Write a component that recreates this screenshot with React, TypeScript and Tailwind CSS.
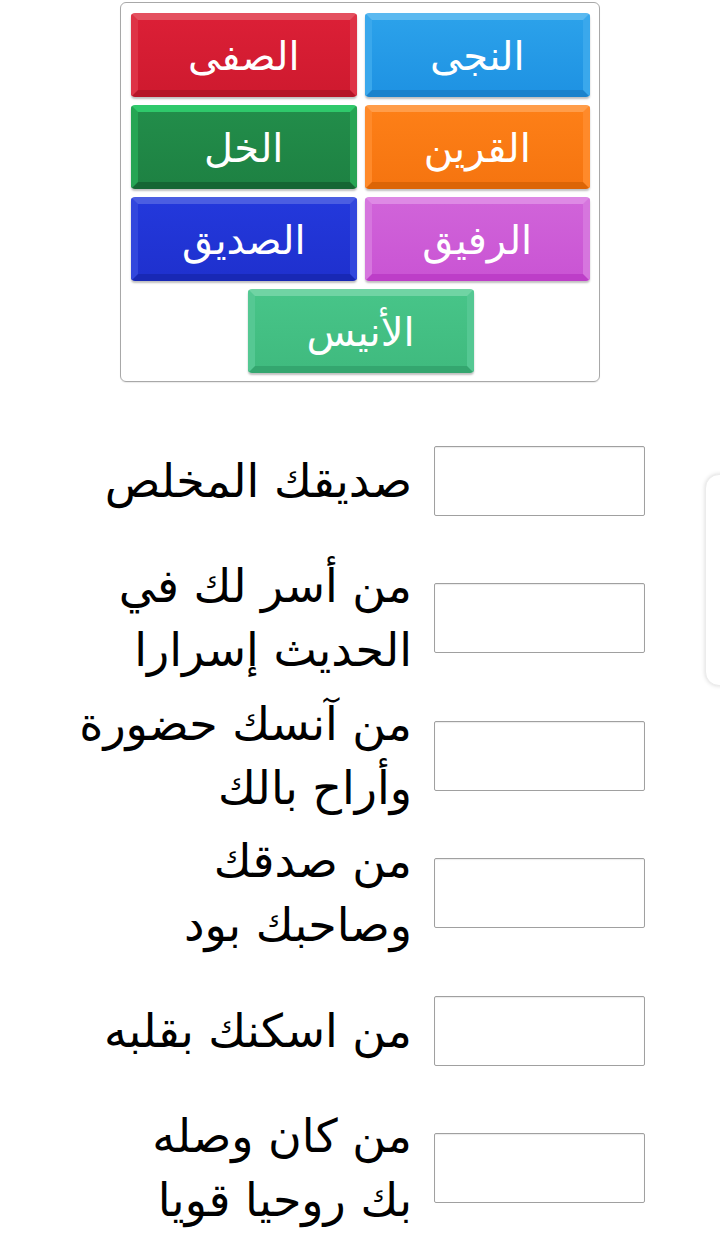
import React from "react";

type Btn = { label: string; cls: string };

const buttons: Btn[] = [
  { label: "النجى", cls: "bg-gradient-to-b from-[#2ba1ea] to-[#1f93e3] border-t-[#5bb9f0] border-x-[#3aa8ec] border-b-[#1a82cc]" },
  { label: "الصفى", cls: "bg-gradient-to-b from-[#db1f36] to-[#cf1a2f] border-t-[#e4505f] border-x-[#de3346] border-b-[#b51427]" },
  { label: "القرين", cls: "bg-gradient-to-b from-[#fd7f17] to-[#f67510] border-t-[#ff9d4a] border-x-[#ff8a2a] border-b-[#dc6506]" },
  { label: "الخل", cls: "bg-gradient-to-b from-[#228d4a] to-[#1e8243] border-t-[#2fc96b] border-x-[#26a554] border-b-[#166634]" },
  { label: "الرفيق", cls: "bg-gradient-to-b from-[#d063d9] to-[#ca55d4] border-t-[#de8ae5] border-x-[#d676de] border-b-[#bd3ec8]" },
  { label: "الصديق", cls: "bg-gradient-to-b from-[#2338db] to-[#1f31cf] border-t-[#4b5ee2] border-x-[#3247dd] border-b-[#1828b5]" },
];

const rows: string[][] = [
  ["صديقك المخلص"],
  ["من أسر لك في", "الحديث إسرارا"],
  ["من آنسك حضورة", "وأراح بالك"],
  ["من صدقك", "وصاحبك بود"],
  ["من اسكنك بقلبه"],
  ["من كان وصله", "بك روحيا قويا"],
];

function Button({ b }: { b: Btn }) {
  return (
    <div
      className={`h-[84px] rounded-[4px] border-[7px] border-solid flex items-center justify-center text-white text-[40px] leading-none shadow-[0_2px_2px_rgba(0,0,0,0.25)] ${b.cls}`}
      style={{ fontFamily: '"DejaVu Sans", sans-serif' }}
    >
      <span className="mt-[2px]">{b.label}</span>
    </div>
  );
}

export default function App() {
  return (
    <div dir="rtl" className="relative w-[720px] min-h-[1241px] bg-white overflow-hidden" style={{ fontFamily: '"DejaVu Sans", sans-serif' }}>
      <div className="pt-[2px] flex justify-center">
        <div className="w-[480px] border border-[#a8a8a8] rounded-[6px] pt-[10px] pb-[8px] pr-[9px] pl-[10px] shadow-[0_1px_1px_rgba(0,0,0,0.08)]">
          <div className="grid grid-cols-2 gap-x-[8px] gap-y-[8px]">
            {buttons.map((b) => (
              <Button key={b.label} b={b} />
            ))}
          </div>
          <div className="flex justify-center mt-[8px]">
            <div className="w-[226px]">
              <Button
                b={{
                  label: "الأنيس",
                  cls: "bg-gradient-to-b from-[#47c488] to-[#40bb7f] border-t-[#70d4a4] border-x-[#55c893] border-b-[#34a66f]",
                }}
              />
            </div>
          </div>
        </div>
      </div>

      <div className="mt-[30px] flex justify-start pr-[75px]">
        <div className="flex flex-col">
          {rows.map((lines, i) => (
            <div key={i} className="h-[137.5px] flex items-center gap-[22px]">
              <div className="w-[211px] h-[70px] shrink-0 border border-[#a0a0a0] rounded-[2px] bg-white shadow-[inset_0_1px_1px_rgba(0,0,0,0.08)]" />
              <div className="text-right text-[46px] leading-[64px] text-black whitespace-nowrap">
                {lines.map((l, j) => (
                  <div key={j}>{l}</div>
                ))}
              </div>
            </div>
          ))}
        </div>
      </div>

      <div className="absolute left-[705px] top-[474px] w-[40px] h-[212px] rounded-[14px] bg-white border border-[#ececec] shadow-[0_0_4px_rgba(0,0,0,0.15)]" />
    </div>
  );
}
